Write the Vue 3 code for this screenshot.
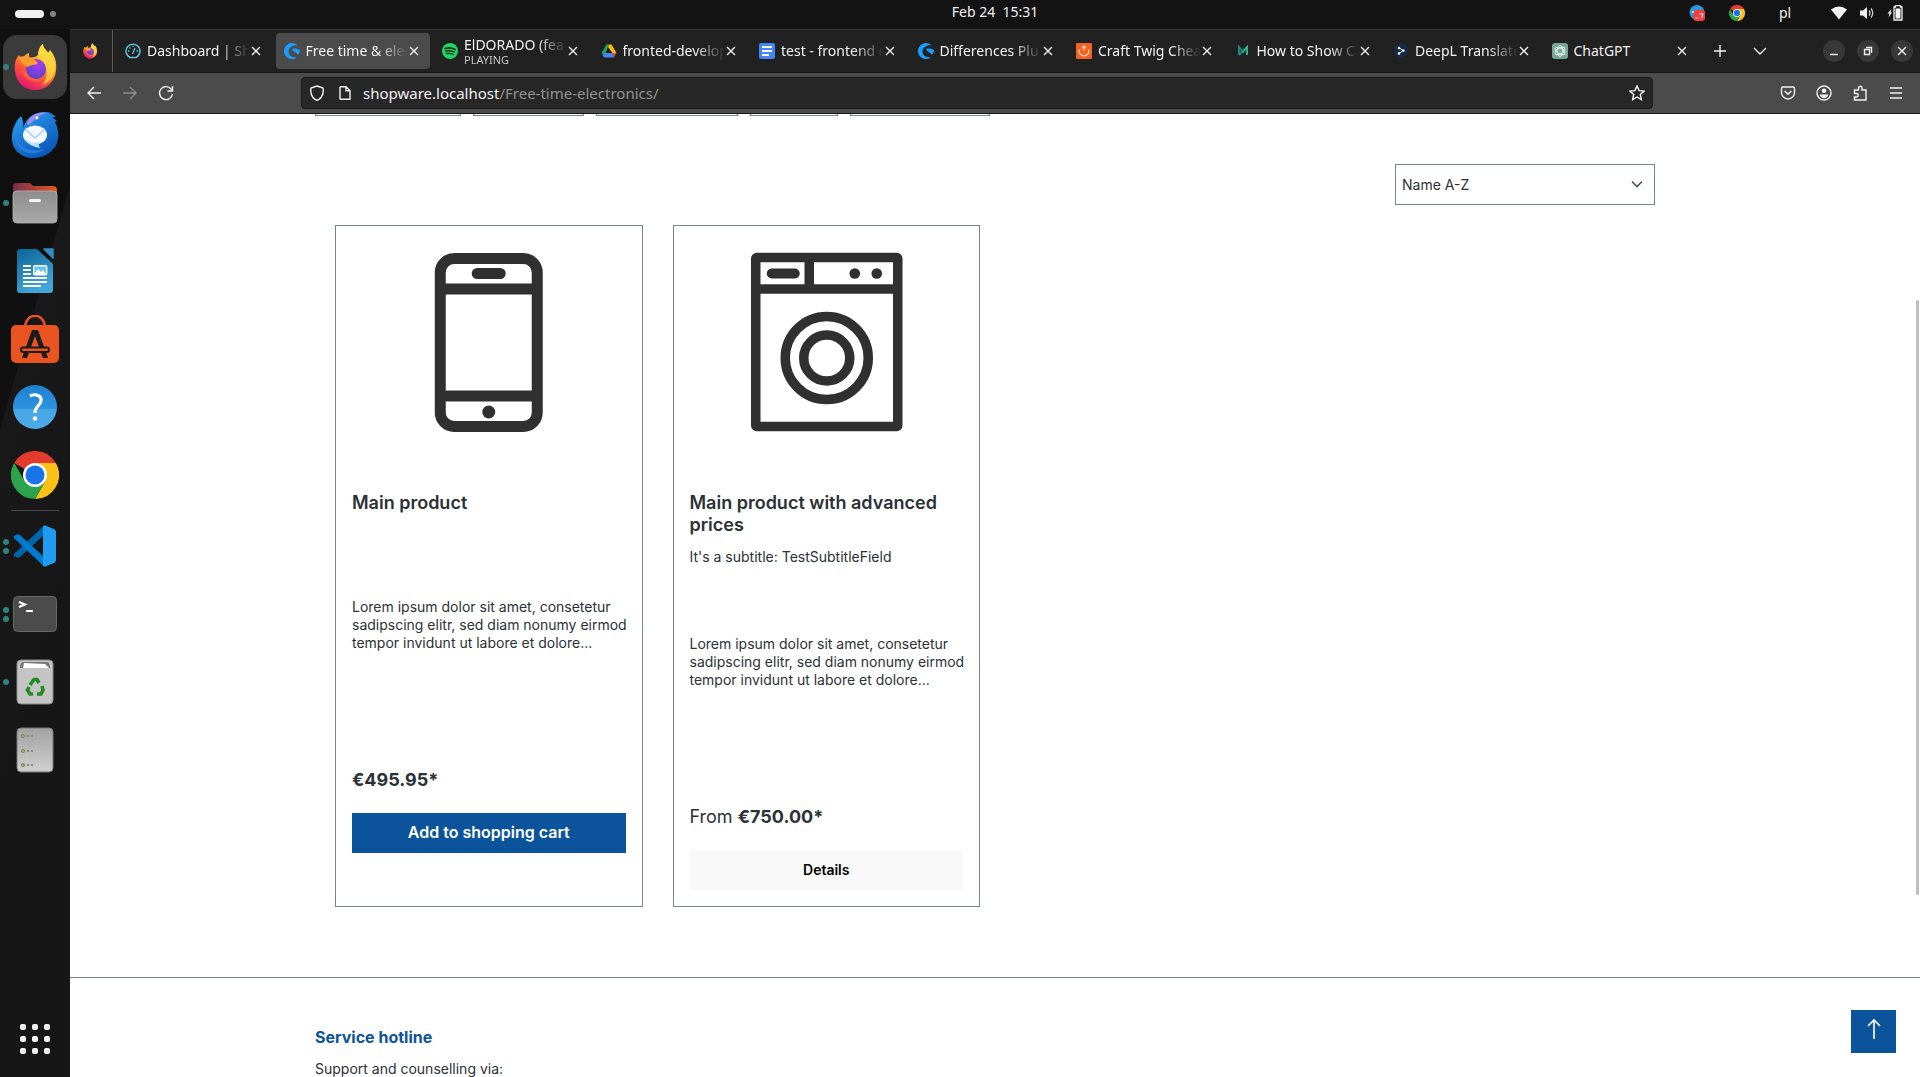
<script setup>
import { ref } from 'vue'

const tabs = [
  { title: 'Dashboard | Sho', icon: 'gauge' },
  { title: 'Free time & elec', icon: 'shopware', active: true },
  { title: 'ElDORADO (fea', icon: 'spotify', note: 'PLAYING' },
  { title: 'fronted-develop', icon: 'gdrive' },
  { title: 'test - frontend d', icon: 'gdocs' },
  { title: 'Differences Plu', icon: 'shopware' },
  { title: 'Craft Twig Chea', icon: 'craft' },
  { title: 'How to Show C', icon: 'magento' },
  { title: 'DeepL Translate', icon: 'deepl' },
  { title: 'ChatGPT', icon: 'chatgpt' }
]

const dockTop = [
  { id: 'firefox', dots: 1, active: true },
  { id: 'thunderbird', dots: 0 },
  { id: 'files', dots: 1 },
  { id: 'writer', dots: 0 },
  { id: 'software', dots: 0 },
  { id: 'help', dots: 0 },
  { id: 'chrome', dots: 0 }
]
const dockBottom = [
  { id: 'vscode', dots: 2 },
  { id: 'terminal', dots: 2 },
  { id: 'trash', dots: 1 },
  { id: 'disk', dots: 0 }
]

const filters = [146, 111, 142, 88, 140]
const sort = ref('Name A-Z')

const lorem = 'Lorem ipsum dolor sit amet, consetetur sadipscing elitr, sed diam nonumy eirmod tempor invidunt ut labore et dolore...'
const products = [
  { title: 'Main product', art: 'phone', price: '€495.95*', action: 'Add to shopping cart', primary: true },
  { title: 'Main product with advanced prices', subtitle: "It's a subtitle: TestSubtitleField", art: 'washer', from: true, price: '€750.00*', action: 'Details' }
]
</script>

<template>
  <div class="desktop">
    <svg class="sprite" aria-hidden="true">
      <defs>
        <linearGradient id="ff-body" x1="0.8" y1="0" x2="0.3" y2="1">
          <stop offset="0" stop-color="#fff04a" /><stop offset="0.35" stop-color="#ffb02e" />
          <stop offset="0.65" stop-color="#ff5436" /><stop offset="1" stop-color="#e3127a" />
        </linearGradient>
        <radialGradient id="ff-globe" cx="0.6" cy="0.3" r="0.8">
          <stop offset="0" stop-color="#b03af2" /><stop offset="1" stop-color="#4848c4" />
        </radialGradient>
        <linearGradient id="tb-body" x1="0" y1="0" x2="0.6" y2="1">
          <stop offset="0" stop-color="#2aa3f5" /><stop offset="1" stop-color="#0c56b8" />
        </linearGradient>
        <linearGradient id="grey-down" x1="0" y1="0" x2="0" y2="1">
          <stop offset="0" stop-color="#a2a2a2" /><stop offset="1" stop-color="#cfcfcf" />
        </linearGradient>
        <linearGradient id="folder-front" x1="0" y1="0" x2="0" y2="1">
          <stop offset="0" stop-color="#8d8d8d" /><stop offset="1" stop-color="#a9a9a9" />
        </linearGradient>
        <linearGradient id="folder-back" x1="0" y1="0" x2="1" y2="0">
          <stop offset="0" stop-color="#77304f" /><stop offset="1" stop-color="#e95420" />
        </linearGradient>
        <linearGradient id="writer-page" x1="0" y1="0" x2="0.4" y2="1">
          <stop offset="0" stop-color="#0a6498" /><stop offset="1" stop-color="#43a6d8" />
        </linearGradient>
        <linearGradient id="help-disc" x1="0" y1="0" x2="0" y2="1">
          <stop offset="0" stop-color="#2080d0" /><stop offset="0.54" stop-color="#2b93df" />
          <stop offset="0.55" stop-color="#48a5e6" /><stop offset="1" stop-color="#4caae9" />
        </linearGradient>
      </defs>

      <symbol id="i-firefox" viewBox="0 0 48 48">
        <path d="M4 28C3 20 5 15 8 12L11 17C12 13 15 11 18 10L18 15C22 14 25 14 27 12C27 7 29 3 32 1C32 5 35 7 37 10L39 7C44 13 46 19 45 28C44 39 35 47 24 47C13 47 5 39 4 28Z" fill="url(#ff-body)" />
        <path d="M27 15C27 8 29 4 32 1C32 7 44 12 44 25C44 34 38 40 31 42C38 35 37 20 27 15Z" fill="#ffdc40" opacity="0.75" />
        <circle cx="25" cy="26" r="10" fill="url(#ff-globe)" />
        <path d="M8 14C15 12 23 15 27 20C24 23 20 21 17 24C13 22 10 21 8 14Z" fill="#ff9e2c" />
        <path d="M15 27C17 37 28 39 36 32C32 41 15 42 11 28Z" fill="#ff5d3d" />
      </symbol>

      <symbol id="i-thunderbird" viewBox="0 0 48 48">
        <path d="M24 47C10 48 0 38 1 25C1 19 4 11 10 5C12 9 13 14 12 18C14 8 22 1 34 1C39 1 42 3 45 6L41 6L46 10L44 11C47 17 48 22 47 28C45 39 36 46 24 47Z" fill="url(#tb-body)" />
        <path d="M16 12C20 3 28 0 36 2C28 3 24 10 17 14Z" fill="#a08cf0" />
        <circle cx="26" cy="7" r="1.4" fill="#fff" />
        <ellipse cx="24" cy="24" rx="12" ry="9.5" fill="#f4f9ff" />
        <path d="M14 18L24 27L34 18" fill="none" stroke="#a9c9ee" stroke-width="1.4" />
        <path d="M13 27C16 34 24 36 29 37C25 31 31 31 34 26C30 33 20 34 13 27Z" fill="#bfe0fa" />
        <path d="M4 22C6 36 18 43 34 38C24 46 5 44 4 22Z" fill="#2f8be8" opacity="0.7" />
      </symbol>

      <symbol id="i-files" viewBox="0 0 48 48">
        <path d="M2 18V7Q2 4 5 4H18Q20 4 21 6L22 7H42Q46 7 46 11V18Z" fill="url(#folder-back)" />
        <rect x="2" y="12" width="44" height="32" rx="4" fill="url(#folder-front)" stroke="#b5b5b5" stroke-width="0.8" />
        <rect x="18" y="20" width="12" height="3" rx="1.5" fill="#f5f5f5" />
      </symbol>

      <symbol id="i-writer" viewBox="0 0 48 48">
        <path d="M9 2H26L42 17V43Q42 46 39 46H9Q6 46 6 43V5Q6 2 9 2Z" fill="url(#writer-page)" />
        <path d="M33 2H42V11Z" fill="#2f8fc2" stroke="#2f8fc2" stroke-width="1.5" stroke-linejoin="round" />
        <path d="M12 19h8M12 23h8M12 27h8M12 31h24M12 35h24M12 39h18" stroke="#fff" stroke-width="2" />
        <rect x="22.7" y="18.7" width="13" height="9" rx="1" fill="#68c4f0" stroke="#fff" stroke-width="1.4" />
        <path d="M23 27L27 22L30 25L32 23L35 27Z" fill="#fff" />
      </symbol>

      <symbol id="i-software" viewBox="0 0 48 48">
        <path d="M14 12C15 -3 33 -3 34 12" fill="none" stroke="#e95420" stroke-width="2.4" />
        <rect y="10" width="48" height="38" rx="5" fill="#e95420" />
        <path d="M21 15H27L37 43H32L24 21L16 43H11Z" fill="#1b1b1b" />
        <rect x="10" y="32.5" width="28" height="4.5" rx="2.2" fill="#e95420" stroke="#1b1b1b" stroke-width="2" />
      </symbol>

      <symbol id="i-help" viewBox="0 0 48 48">
        <circle cx="24" cy="24" r="22" fill="url(#help-disc)" />
        <path d="M19 13C25 10 31 13 30 18C29 23 24 23 24 30" fill="none" stroke="#fff" stroke-width="3.2" />
        <circle cx="24" cy="35.5" r="2.3" fill="#fff" />
      </symbol>

      <symbol id="i-chrome" viewBox="0 0 48 48">
        <path d="M24 24L3.2 12A24 24 0 0 1 44.8 12Z" fill="#e33b2e" />
        <path d="M24 12H44.8A24 24 0 0 1 24 48L34.4 30Z" fill="#fbc116" />
        <path d="M3.2 12A24 24 0 0 0 24 48L34.4 30L24 24L13.6 30Z" fill="#2ba24c" />
        <circle cx="24" cy="24" r="12" fill="#fff" />
        <circle cx="24" cy="24" r="9.5" fill="#1a73e8" />
      </symbol>

      <symbol id="i-vscode" viewBox="0 0 48 48">
        <path d="M3 32L33 3.5V13L9 35Q7 37 3 34Q2 33 3 32Z" fill="#0065a9" />
        <path d="M3 16L33 44.5V35L9 13Q7 11 3 14Q2 15 3 16Z" fill="#007acc" />
        <path d="M33 3L43 7Q45 8 45 10V38Q45 40 43 41L33 45Q35 43 35 40V8Q35 5 33 3Z" fill="#1f9cf0" />
        <path d="M32 4H35V44H32Z" fill="#1f9cf0" />
      </symbol>

      <symbol id="i-terminal" viewBox="0 0 48 48">
        <rect x="2.5" y="6.5" width="43" height="35" rx="4" fill="#4b4b4b" stroke="#686868" />
        <path d="M8 12L14 14.5L8 17" fill="none" stroke="#fff" stroke-width="2" />
        <path d="M15 21H22" stroke="#fff" stroke-width="2" />
      </symbol>

      <symbol id="i-trash" viewBox="0 0 48 48">
        <rect x="6" y="2" width="36" height="44" rx="4" fill="#c4c4c4" stroke="#888" />
        <path d="M9 10Q9 4 12 4H36Q39 4 39 10Z" fill="#777" />
        <path d="M12 10L13 5L34 6L38 10Z" fill="#fff" />
        <g fill="none" stroke="#218a21" stroke-width="3.6">
          <path d="M19 27L23 21.5H26L28 25" /><path d="M31 28L32 32L30 36H26" /><path d="M22 36H19L16.5 32L18 29" />
        </g>
      </symbol>

      <symbol id="i-disk" viewBox="0 0 48 48">
        <rect x="6" y="2" width="36" height="44" rx="4" fill="url(#grey-down)" stroke="#777" />
        <g fill="#93b843" stroke="#777" stroke-width="0.8">
          <circle cx="12" cy="10" r="1.6" /><circle cx="12" cy="25" r="1.6" /><circle cx="12" cy="39" r="1.6" />
        </g>
        <path d="M16 10h2m2 0h2M16 25h2m2 0h2M16 39h2m2 0h2" stroke="#868686" stroke-width="2" />
      </symbol>

      <symbol id="i-gauge" viewBox="0 0 16 16">
        <path d="M5 14.5A7 7 0 1 1 11 14.5Z" fill="none" stroke="#5fc4dc" stroke-width="1.5" />
        <path d="M7.5 11L10 5M3 8h1.5M4.5 4.5l1 1M8 3v1M11.5 8H13" stroke="#5fc4dc" stroke-width="1.3" />
      </symbol>
      <symbol id="i-shopware" viewBox="0 0 16 16">
        <path d="M13.5 2.2A8 8 0 1 0 12.8 14.4C8.5 14.5 4.5 13 4.5 8.5C4.5 3.5 10 2 13.5 2.2Z" fill="#189eff" />
        <path d="M16 7.5C14.5 5.8 11.5 5.2 8.3 5.8C8 8.5 11.5 8.5 13.5 11.5C15 11 16 9.5 16 7.5Z" fill="#189eff" />
      </symbol>
      <symbol id="i-spotify" viewBox="0 0 16 16">
        <circle cx="8" cy="8" r="8" fill="#1ed760" />
        <g fill="none" stroke="#17251b" stroke-linecap="round">
          <path d="M3.2 5.5Q8 4 13 6.5" stroke-width="1.7" /><path d="M3.7 8.2Q8 7 12.2 9.2" stroke-width="1.4" /><path d="M4.2 10.7Q8 9.8 11.4 11.7" stroke-width="1.2" />
        </g>
      </symbol>
      <symbol id="i-gdrive" viewBox="0 0 16 16">
        <path d="M5.5 1.5H8L5.8 7L3 13L0.5 10Z" fill="#22a45a" />
        <path d="M8 1.5H10.5L15.5 10H11.5L7 4Z" fill="#fbbc05" />
        <path d="M3.5 10H12L13 14.5H3L1.5 12.5Z" fill="#4285f4" />
        <path d="M11.5 10H15.5L13 14.5Z" fill="#ea4335" />
        <path d="M8 6.5L10 10H6Z" fill="#212121" />
      </symbol>
      <symbol id="i-gdocs" viewBox="0 0 16 16">
        <rect width="16" height="16" rx="2" fill="#4285f4" />
        <path d="M3 4h10M3 8h10M3 12h7" stroke="#fff" stroke-width="2" />
      </symbol>
      <symbol id="i-craft" viewBox="0 0 16 16">
        <rect width="16" height="16" rx="1" fill="#f26322" />
        <path d="M3.5 6.5A4.8 4.8 0 1 0 12.5 6.5M8 7.5V3M6 5L8 3L10 5" fill="none" stroke="#ffc9b0" stroke-width="1.4" />
      </symbol>
      <symbol id="i-magento" viewBox="0 0 16 16">
        <path d="M4 12V4L8 9L12 4V12M4 12L12 4" fill="none" stroke="#178f83" stroke-width="1.9" />
        <path d="M8 9L12 4V12" fill="none" stroke="#3ecb7c" stroke-width="1.2" />
      </symbol>
      <symbol id="i-deepl" viewBox="0 0 16 16">
        <path d="M8 0L14.5 3.8V11.5L8 15.5L1.5 11.5V3.8Z" fill="#152c49" />
        <path d="M6 5L10.5 7.5L6 10.5" fill="none" stroke="#fff" />
        <circle cx="6" cy="5" r="1.2" fill="#fff" /><circle cx="10.5" cy="7.6" r="1.2" fill="#fff" /><circle cx="6" cy="10.5" r="1.2" fill="#fff" />
      </symbol>
      <symbol id="i-chatgpt" viewBox="0 0 16 16">
        <rect width="16" height="16" rx="3" fill="#74a897" />
        <g fill="none" stroke="#e9f4f0" stroke-width="0.9">
          <ellipse cx="8" cy="8" rx="2.8" ry="5.5" /><ellipse cx="8" cy="8" rx="2.8" ry="5.5" transform="rotate(60 8 8)" /><ellipse cx="8" cy="8" rx="2.8" ry="5.5" transform="rotate(120 8 8)" />
        </g>
      </symbol>

      <symbol id="i-phone" viewBox="0 0 250 200">
        <g fill="none" stroke="#303030">
          <rect x="76.5" y="16.5" width="97" height="168" rx="14" stroke-width="11" />
          <path d="M76 47H174M76 154H174" stroke-width="11" />
        </g>
        <rect x="108" y="26" width="34" height="11" rx="5.5" fill="#303030" />
        <circle cx="125" cy="170" r="6.5" fill="#303030" />
      </symbol>
      <symbol id="i-washer" viewBox="0 0 250 200">
        <g fill="none" stroke="#303030">
          <rect x="54" y="15.5" width="142" height="169" rx="1" stroke-width="9.5" />
          <path d="M54 47H196M107.5 15V47" stroke-width="9.5" />
          <circle cx="125" cy="116" r="41.5" stroke-width="9.5" />
          <circle cx="125" cy="116" r="23" stroke-width="9.5" />
        </g>
        <rect x="65" y="26.5" width="33" height="10" rx="5" fill="#303030" />
        <circle cx="153" cy="31.5" r="5.3" fill="#303030" /><circle cx="175" cy="31.5" r="5.3" fill="#303030" />
      </symbol>
    </svg>

    <header class="topbar">
      <div class="workspaces"><span class="pill"></span><span class="dot"></span></div>
      <time class="clock">Feb 24&nbsp; 15:31</time>
      <div class="tray">
        <svg class="tray-app" viewBox="0 0 16 16">
          <circle cx="8" cy="7.5" r="7.5" fill="#2b98dc" />
          <path d="M3 7h3" stroke="#fff" stroke-width="1.5" />
          <rect x="4.5" y="5" width="11.5" height="11" rx="3" fill="#f2403c" />
          <path d="M6.5 13h1m1 0h1m1-4h3.5l-1.5 4" fill="none" stroke="#fff" />
        </svg>
        <svg class="tray-chrome"><use href="#i-chrome" /></svg>
        <span class="lang">pl</span>
        <svg class="tray-wifi" viewBox="0 0 16 16"><path d="M0 4.5Q8 -1.5 16 4.5L8 14.5Z" fill="#f2f2f2" /></svg>
        <svg class="tray-vol" viewBox="0 0 16 16">
          <path d="M1 5.5H4L8 2V14L4 10.5H1Z" fill="#f2f2f2" />
          <path d="M10 5.5Q12 8 10 10.5M12 3.5Q15.5 8 12 12.5" fill="none" stroke="#ccc" stroke-width="1.3" />
        </svg>
        <svg class="tray-bat" viewBox="0 0 16 16">
          <path d="M4.5 4L0.5 8.5H2.5L1.5 12.5L5 7.5H3.5Z" fill="#f2f2f2" />
          <path d="M8.5 2V0.7H13.5V2H15V15H7V2Z" fill="none" stroke="#f2f2f2" stroke-width="1.3" /><path d="M8.5 3.5H13.5V13.5H8.5Z" fill="#f2f2f2" />
        </svg>
      </div>
    </header>

    <div class="workarea">
      <nav class="dock">
        <button v-for="app in dockTop" :key="app.id" class="dock-item" :class="{ active: app.active }">
          <span class="dots"><i v-for="n in app.dots" :key="n"></i></span>
          <svg class="dock-icon"><use :href="'#i-' + app.id" /></svg>
        </button>
        <div class="dock-sep"></div>
        <button v-for="app in dockBottom" :key="app.id" class="dock-item">
          <span class="dots"><i v-for="n in app.dots" :key="n"></i></span>
          <svg class="dock-icon"><use :href="'#i-' + app.id" /></svg>
        </button>
        <button class="app-grid"><i v-for="n in 9" :key="n"></i></button>
      </nav>

      <section class="browser">
        <div class="tabbar">
          <button class="pinned"><svg class="fav"><use href="#i-firefox" /></svg></button>
          <div class="tabs">
            <div v-for="tab in tabs" :key="tab.title" class="tab" :class="{ active: tab.active }">
              <svg class="fav"><use :href="'#i-' + tab.icon" /></svg>
              <div class="tab-text" :class="{ noted: tab.note, fits: tab.title.length < 10 }">
                <span class="tab-title">{{ tab.title }}</span>
                <span v-if="tab.note" class="tab-note">{{ tab.note }}</span>
              </div>
              <button class="tab-close"><svg viewBox="0 0 10 10"><path d="M1 1L9 9M9 1L1 9" /></svg></button>
            </div>
          </div>
          <div class="tab-tools">
            <button><svg viewBox="0 0 16 16"><path d="M8 2V14M2 8H14" /></svg></button>
            <button><svg viewBox="0 0 16 16"><path d="M2 5L8 11L14 5" /></svg></button>
          </div>
          <div class="window-tools">
            <button><svg viewBox="0 0 22 22"><path d="M7 14.5H15" /></svg></button>
            <button><svg viewBox="0 0 22 22"><path d="M7.5 9.5H12.5V14.5H7.5ZM9 7.5H14.5V13" /></svg></button>
            <button><svg viewBox="0 0 22 22"><path d="M7 7L15 15M15 7L7 15" /></svg></button>
          </div>
        </div>

        <div class="toolbar">
          <div class="nav">
            <button><svg viewBox="0 0 16 16"><path d="M15 8H2M8 2L2 8L8 14" /></svg></button>
            <button class="off"><svg viewBox="0 0 16 16"><path d="M1 8H14M8 2L14 8L8 14" /></svg></button>
            <button><svg viewBox="0 0 16 16"><path d="M13.5 4.5A6.5 6.5 0 1 0 14.5 9M14.5 1V6H9.5" /></svg></button>
          </div>
          <div class="urlbar">
            <svg class="ui" viewBox="0 0 16 16"><path d="M8 1L14 3Q15 9 12 12.5Q10.5 14.5 8 15.3Q5.5 14.5 4 12.5Q1 9 2 3Z" /></svg>
            <svg class="ui" viewBox="0 0 16 16"><path d="M3.5 1.7H9L13 5.7V14.3H3.5Q3 14.3 3 13.8V2.2ZM9 1.7V5.7H13" /></svg>
            <a class="url" href="#">shopware.localhost<span>/Free-time-electronics/</span></a>
            <svg class="ui" viewBox="0 0 16 16"><path d="M8 1L10.1 5.6L15 6.1L11.3 9.5L12.3 14.5L8 12L3.7 14.5L4.7 9.5L1 6.1L5.9 5.6Z" /></svg>
          </div>
          <div class="extras">
            <button><svg viewBox="0 0 16 16"><path d="M3 2H13Q14.5 2 14.5 3.5V7.5A6.5 6.5 0 0 1 1.5 7.5V3.5Q1.5 2 3 2ZM4.7 6L8 9.2L11.3 6" /></svg></button>
            <button><svg viewBox="0 0 16 16"><circle cx="8" cy="8" r="7" /><circle cx="8" cy="5.8" r="2.3" fill="#f2f2f2" stroke="none" /><path d="M3.5 9.5H12.5Q11 13.2 8 13.2Q5 13.2 3.5 9.5Z" fill="#f2f2f2" stroke="none" /></svg></button>
            <button><svg viewBox="0 0 16 16"><path d="M2.5 5H6.5V3A1.7 1.7 0 0 1 10 3V5H14V15H2.5V12H4.5A1.7 1.7 0 0 0 4.5 8.5H2.5Z" /></svg></button>
            <button><svg viewBox="0 0 16 16"><path d="M2 3H14M2 8H14M2 13H14" /></svg></button>
          </div>
        </div>

        <div class="viewport">
          <main class="container">
            <div class="filters"><span v-for="w in filters" :key="w" :style="{ width: w + 'px' }"></span></div>
            <div class="sorting">
              <select v-model="sort" aria-label="Name A-Z"><option>Name A-Z</option></select>
              <svg viewBox="0 0 16 16"><path d="M3 5.5L8 10.5L13 5.5" /></svg>
            </div>
            <div class="listing">
              <article v-for="p in products" :key="p.title" class="card">
                <svg class="art"><use :href="'#i-' + p.art" /></svg>
                <h2>{{ p.title }}</h2>
                <p v-if="p.subtitle" class="subtitle">{{ p.subtitle }}</p>
                <p class="desc">{{ lorem }}</p>
                <p class="price"><template v-if="p.from">From </template><strong>{{ p.price }}</strong></p>
                <button class="buy" :class="{ primary: p.primary }">{{ p.action }}</button>
              </article>
            </div>
          </main>
          <footer>
            <div class="container">
              <h3>Service hotline</h3>
              <p>Support and counselling via:</p>
            </div>
          </footer>
          <button class="scroll-up"><svg viewBox="0 0 24 24"><path d="M12 22V3M6 9L12 3L18 9" /></svg></button>
          <div class="scroll-thumb"></div>
        </div>
      </section>
    </div>
  </div>
</template>

<style>
body { margin: 0; background: #131313; }
</style>

<style scoped>
* { box-sizing: border-box; }
button { border: 0; padding: 0; margin: 0; background: none; color: inherit; font: inherit; display: flex; align-items: center; justify-content: center; }
svg { display: block; flex: none; }
.sprite { position: absolute; width: 0; height: 0; }

.desktop { height: 100vh; display: flex; flex-direction: column; overflow: hidden; background: #131313; color: #f2f2f2; font: 14px/20px "Noto Sans", sans-serif; }

.topbar { height: 29px; flex: none; display: grid; grid-template-columns: 1fr auto 1fr; align-items: center; padding: 0 17px 4px 15px; }
.workspaces { display: flex; align-items: center; gap: 6px; padding-top: 2px; }
.pill { width: 29px; height: 8px; border-radius: 4px; background: #f2f2f2; }
.dot { width: 6px; height: 6px; border-radius: 3px; background: #858585; }
.clock { padding: 0 0 2px 72px; }
.tray { display: flex; justify-content: flex-end; align-items: center; }
.tray svg { width: 16px; height: 16px; }
.tray-chrome { margin-left: 24px; }
.lang { width: 16px; margin: 0 36px 0 34px; }
.tray-wifi { margin-right: 12px; }
.tray-vol { margin-right: 12px; }

.workarea { flex: 1; min-height: 0; display: flex; }

.dock { width: 70px; flex: none; display: flex; flex-direction: column; padding: 4px 3px 6px; background: linear-gradient(106deg, #101010 0, #101010 110px, #191919 111px, #161616 240px); }
.dock-item { position: relative; width: 64px; height: 64px; margin: 2px 0; border-radius: 14px; flex: none; }
.dock-item.active { background: #3b3b3b; }
.dock-icon { width: 48px; height: 48px; }
.dots { position: absolute; left: 0; top: 0; height: 64px; display: flex; flex-direction: column; justify-content: center; gap: 3px; }
.dots i { width: 6px; height: 6px; border-radius: 3px; background: #308280; }
.dock-sep { height: 3px; flex: none; margin: 0 8px; background: linear-gradient(#484848, #484848) center 1px / 100% 1px no-repeat; }
.app-grid { width: 64px; height: 64px; margin-top: auto; display: grid; grid-template-columns: repeat(3, 6px); gap: 6px; place-content: center; }
.app-grid i { width: 6px; height: 6px; border-radius: 2px; background: #f2f2f2; }

.browser { flex: 1; min-width: 0; display: flex; flex-direction: column; }
.tabbar { height: 44px; flex: none; display: flex; align-items: center; background: #212121; border-top: 1px solid #363636; border-bottom: 1px solid #161616; }
.fav { width: 16px; height: 16px; }
.pinned { width: 43px; height: 100%; flex: none; border-right: 1px solid #5b5b5b; padding-right: 2px; }
.tabs { flex: 1; min-width: 0; display: flex; padding-left: 2px; }
.tab { flex: 1; min-width: 0; height: 36px; margin: 0 2px; padding: 0 10px 0 8px; display: flex; align-items: center; border-radius: 4px; }
.tab.active { background: #4b4b4b; }
.tab-text { flex: 1; min-width: 0; margin-left: 6px; white-space: nowrap; mask-image: linear-gradient(to left, transparent, #000 30px); }
.tab-text.fits { mask-image: none; }
.tab-title { display: block; font-size: 14px; line-height: 20px; }
.tab-note { display: block; font-size: 11px; line-height: 12px; color: #c6c6c6; }
.noted .tab-title { line-height: 18px; }
.tab-close { width: 12px; height: 20px; flex: none; }
.tab-close svg { width: 10px; height: 10px; }
.tab-tools { display: flex; gap: 8px; flex: none; padding: 0 47px 0 4px; }
.tab-tools button { width: 32px; height: 32px; }
.tab-tools svg, .nav svg, .extras svg, .ui { width: 16px; height: 16px; }
.tab-close svg, .tab-tools svg, .nav svg, .extras svg, .ui, .window-tools svg { fill: none; stroke: #f2f2f2; stroke-width: 1.4; }
.window-tools { display: flex; gap: 12px; flex: none; padding-right: 7px; }
.window-tools button { width: 22px; height: 22px; border-radius: 50%; background: #383838; }
.window-tools svg { width: 22px; height: 22px; }

.toolbar { height: 41px; flex: none; display: flex; align-items: center; background: #4b4b4b; border-bottom: 1px solid #161616; }
.nav { display: flex; gap: 4px; padding-left: 8px; width: 231px; flex: none; }
.nav button { width: 32px; height: 32px; }
.nav .off { opacity: 0.4; }
.urlbar { flex: 1; min-width: 0; height: 32px; display: flex; align-items: center; gap: 12px; padding: 0 7px; background: #272727; border: 1px solid #191919; border-radius: 4px; }
.url { flex: 1; min-width: 0; margin-left: -2px; color: #f2f2f2; text-decoration: none; font-size: 15px; }
.url span { color: #929292; }
.extras { width: 267px; flex: none; display: flex; justify-content: flex-end; gap: 4px; padding-right: 8px; }
.extras button { width: 32px; height: 32px; }

.viewport { position: relative; flex: 1; min-height: 0; overflow: hidden; background: #fff; color: #2b3136; font: 14px/18px Inter, sans-serif; }
.container { max-width: 1400px; margin: 0 auto; padding: 0 40px 0 20px; }
.filters { display: flex; gap: 12px; height: 2px; }
.filters span { border: 1px solid #798490; border-top: 0; }
.sorting { position: relative; width: 260px; margin: 48px 0 20px auto; }
.sorting select { width: 100%; height: 41px; padding: 0 6px; border: 1px solid #798490; border-radius: 0; background: #fff; color: #2b3136; font: inherit; appearance: none; }
.sorting svg { position: absolute; right: 10px; top: 12px; width: 16px; height: 16px; fill: none; stroke: #4a545b; stroke-width: 1.6; }
.listing { display: grid; grid-template-columns: repeat(4, 1fr); gap: 30px; padding-left: 20px; }
.card { display: flex; flex-direction: column; padding: 16px; border: 1px solid #798490; }
.art { width: 100%; height: 200px; margin-bottom: 50px; }
.card h2 { min-height: 44px; margin: 0 0 10px; font-size: 18px; line-height: 22px; font-weight: 600; }
.card p { margin: 0; }
.card .subtitle { line-height: 21px; margin-bottom: 16px; }
.card .desc { height: 150px; margin: 52px -4px 20px 0; }
.card .price { font-size: 18px; line-height: 24px; margin-bottom: 21px; }
.price strong { font-weight: 700; }
.buy { width: 100%; height: 40px; background: #f9f9f9; color: #000; font-size: 14px; font-weight: 600; }
.buy.primary { background: #0b539b; color: #fff; font-size: 16px; padding-bottom: 2px; }
footer { margin-top: 70px; border-top: 1px solid #798490; padding-top: 47px; }
footer h3 { margin: 0 0 11px; font-size: 16px; line-height: 24px; font-weight: 700; color: #0b539b; }
footer p { margin: 0; }
.scroll-up { position: absolute; right: 24px; bottom: 24px; width: 45px; height: 43px; background: #0b539b; padding-bottom: 6px; }
.scroll-up svg { width: 24px; height: 24px; fill: none; stroke: #fff; stroke-width: 1.6; }
.scroll-thumb { position: absolute; right: 1px; top: 186px; width: 3px; height: 595px; border-radius: 2px; background: #bdbdbd; }
</style>
